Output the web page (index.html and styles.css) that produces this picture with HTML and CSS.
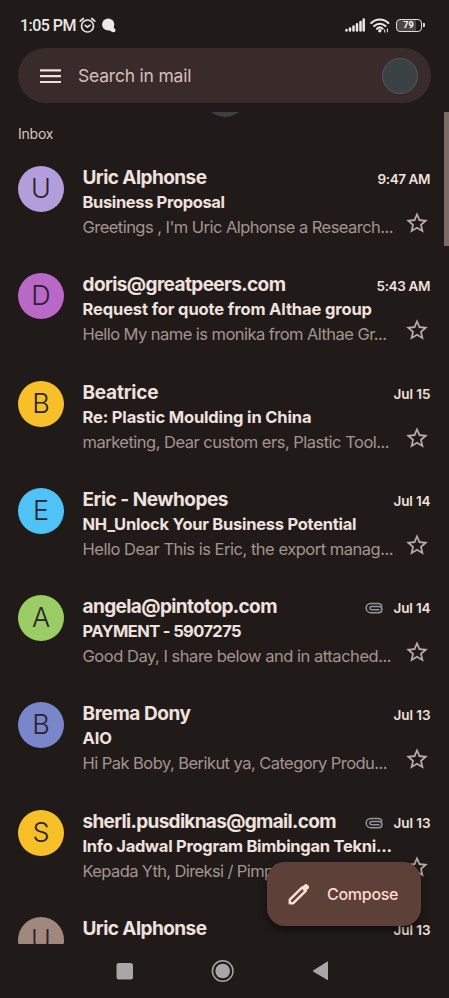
FILE: index.html
```html
<!DOCTYPE html>
<html lang="en">
<head>
<meta charset="utf-8">
<title>Inbox</title>
<link rel="stylesheet" href="styles.css">
</head>
<body>
<svg width="0" height="0" class="defs">
  <symbol id="star" viewBox="0 0 24 24"><path fill="currentColor" d="M22 9.24l-7.19-.62L12 2 9.19 8.63 2 9.24l5.46 4.73L5.82 21 12 17.27 18.18 21l-1.63-7.03L22 9.24zM12 15.4l-3.76 2.27 1-4.28-3.32-2.88 4.38-.38L12 6.1l1.71 4.04 4.38.38-3.32 2.88 1 4.28L12 15.4z"/></symbol>
  <symbol id="clip" viewBox="0 0 18 12"><path fill="none" stroke="currentColor" stroke-width="1.5" stroke-linecap="round" d="M14 7.8H6.6a1.7 1.7 0 0 1 0-3.4h7.2a3 3 0 0 1 0 6.3H5.8a4.6 4.6 0 0 1 0-9.3h7.2q3 0 3.9 2.6"/></symbol>
</svg>
<div class="phone">
  <header class="status">
    <span class="clock" data-w="56.5">1:05 PM</span>
    <svg class="alarm" viewBox="0 0 17 17"><g fill="none" stroke="#e8e4e2" stroke-width="1.7" stroke-linecap="round"><circle cx="8.5" cy="9" r="6"/><path d="M1.2 4.2L4.3 1.5M15.8 4.2L12.7 1.5M6.2 8.4l2.2 1.8 2.6-2"/></g></svg>
    <svg class="bubble" viewBox="0 0 14 15"><g fill="#ece8e6"><circle cx="6.2" cy="6.5" r="6.1"/><path d="M7 12.2l4-4 2.2 4-2.2 2z"/><circle cx="11.5" cy="12.2" r="2"/></g></svg>
    <svg class="signal" viewBox="0 0 20 14"><path stroke="#ece8e6" stroke-width="2.5" stroke-linecap="round" d="M1.5 12v.5M5 10.5v2M8.5 8.5v4M12 6.2v6.3M15.5 4v8.5M18.7 1.5v11"/></svg>
    <svg class="wifi" viewBox="0 0 20 15"><g fill="none" stroke="#ece8e6" stroke-width="2.1" stroke-linecap="round"><path d="M1.3 5a12 12 0 0 1 17 0M4.2 8a8 8 0 0 1 11.2 0M7 10.7a4.2 4.2 0 0 1 5.6 0"/></g><circle cx="9.8" cy="12.8" r="1.7" fill="#ece8e6"/><path stroke="#ece8e6" d="M14.7 11.5v3M17.4 10.5v3.8"/></svg>
    <span class="battery"><b>79</b></span>
  </header>
  <div class="search">
    <svg class="menu" viewBox="0 0 21 14"><path stroke="#efdfdc" stroke-width="2.2" d="M0 1.3h21M0 7.2h21M0 13h21"/></svg>
    <span class="hint" data-w="113.5">Search in mail</span>
    <span class="account"></span>
  </div>
  <main class="list">
    <div class="spinner"></div>
    <div class="scrollbar"></div>
    <h1 class="label"><span data-w="35.5">Inbox</span></h1>

    <article class="mail">
      <div class="avatar lilac">U</div>
      <div class="text">
        <div class="name"><span data-w="124.5">Uric Alphonse</span></div>
        <div class="subject"><span data-w="142.5">Business Proposal</span></div>
        <div class="snippet"><span data-w="311">Greetings , I'm Uric Alphonse a Research...</span></div>
      </div>
      <div class="date"><span data-w="53">9:47 AM</span></div>
      <svg class="star"><use href="#star"/></svg>
    </article>

    <article class="mail">
      <div class="avatar violet">D</div>
      <div class="text">
        <div class="name"><span data-w="203.5">doris@greatpeers.com</span></div>
        <div class="subject"><span data-w="289.5">Request for quote from Althae group</span></div>
        <div class="snippet"><span data-w="304.5">Hello My name is monika from Althae Gr...</span></div>
      </div>
      <div class="date"><span data-w="54">5:43 AM</span></div>
      <svg class="star"><use href="#star"/></svg>
    </article>

    <article class="mail">
      <div class="avatar amber">B</div>
      <div class="text">
        <div class="name"><span data-w="76">Beatrice</span></div>
        <div class="subject"><span data-w="229">Re: Plastic Moulding in China</span></div>
        <div class="snippet"><span data-w="307">marketing, Dear custom ers, Plastic Tool...</span></div>
      </div>
      <div class="date"><span data-w="37">Jul 15</span></div>
      <svg class="star"><use href="#star"/></svg>
    </article>

    <article class="mail">
      <div class="avatar sky">E</div>
      <div class="text">
        <div class="name"><span data-w="146">Eric - Newhopes</span></div>
        <div class="subject"><span data-w="274">NH_Unlock Your Business Potential</span></div>
        <div class="snippet"><span data-w="311">Hello Dear This is Eric, the export manag...</span></div>
      </div>
      <div class="date"><span data-w="37">Jul 14</span></div>
      <svg class="star"><use href="#star"/></svg>
    </article>

    <article class="mail">
      <div class="avatar green">A</div>
      <div class="text">
        <div class="name"><span data-w="195">angela@pintotop.com</span></div>
        <div class="subject"><span data-w="159">PAYMENT - 5907275</span></div>
        <div class="snippet"><span data-w="309">Good Day, I share below and in attached...</span></div>
      </div>
      <div class="date"><svg class="clip"><use href="#clip"/></svg><span data-w="37">Jul 14</span></div>
      <svg class="star"><use href="#star"/></svg>
    </article>

    <article class="mail">
      <div class="avatar indigo">B</div>
      <div class="text">
        <div class="name"><span data-w="108.5">Brema Dony</span></div>
        <div class="subject"><span data-w="29.5">AIO</span></div>
        <div class="snippet"><span data-w="305">Hi Pak Boby, Berikut ya, Category Produ...</span></div>
      </div>
      <div class="date"><span data-w="37">Jul 13</span></div>
      <svg class="star"><use href="#star"/></svg>
    </article>

    <article class="mail">
      <div class="avatar amber">S</div>
      <div class="text">
        <div class="name"><span data-w="254">sherli.pusdiknas@gmail.com</span></div>
        <div class="subject"><span data-w="309.5">Info Jadwal Program Bimbingan Tekni...</span></div>
        <div class="snippet"><span data-w="195">Kepada Yth, Direksi / Pimpi</span></div>
      </div>
      <div class="date"><svg class="clip"><use href="#clip"/></svg><span data-w="37">Jul 13</span></div>
      <svg class="star"><use href="#star"/></svg>
    </article>

    <article class="mail">
      <div class="avatar brown">U</div>
      <div class="text">
        <div class="name"><span data-w="124.5">Uric Alphonse</span></div>
      </div>
      <div class="date"><span data-w="37">Jul 13</span></div>
    </article>
  </main>
  <nav class="nav">
    <svg viewBox="0 0 449 54"><g fill="#a9a6a5"><rect x="116.5" y="19" width="16.5" height="16.5" rx="2.5"/><circle cx="222.7" cy="27" r="7.3"/><path d="M313.5 26.2L327 17.8q1-.6 1 .6v16.8q0 1.200-1 .6L313.500 27.800q-1.200-.8 0-1.600z"/></g><circle cx="222.700" cy="27" r="10.300" fill="none" stroke="#a9a6a5" stroke-width="1.500"/></svg>
  </nav>
  <button class="compose">
    <svg viewBox="0 0 22 22"><path fill="none" stroke="#ffdbd1" stroke-width="2.5" stroke-linejoin="round" d="M1.8 20.200v-3.500L14.200 4.300l3.500 3.500L5.300 20.200z"/><path fill="#ffdbd1" d="M13.300 4.800l3.300-3.300q1.400-1.200 2.800 0l1.200 1.200q1.200 1.400 0 2.800l-3.300 3.300z"/></svg>
    <span data-w="71.5">Compose</span>
  </button>
</div>
<script src="fit.js"></script>
</body>
</html>
```
FILE: styles.css
```css
* { box-sizing: border-box; }
body { margin: 0; background: #201b19; font-family: Inter, Roboto, sans-serif; color: #efe1de; }
.defs { position: absolute; }
.phone { position: relative; width: 449px; height: 998px; overflow: hidden; display: flex; flex-direction: column; }
[data-w] { display: inline-block; white-space: nowrap; }

.status { height: 48px; flex: none; display: flex; align-items: center; padding: 2px 27.5px 0 20px; }
.clock { font-family: Roboto, sans-serif; font-size: 16px; font-weight: 500; line-height: 20px; color: #ebe7e5; padding-top: 2px; }
.alarm { width: 17px; height: 17px; margin-left: 3px; }
.bubble { width: 14px; height: 15px; margin-left: 6px; }
.signal { width: 20px; height: 14px; margin-left: auto; }
.wifi { width: 20px; height: 15px; margin-left: 5px; }
.battery { position: relative; width: 26px; height: 13px; margin-left: 6px; border: 1.5px solid #dedad8; border-radius: 4px; background: linear-gradient(90deg, #4a4644 78%, #201b19 78%); display: flex; align-items: center; justify-content: center; }
.battery b { font: 700 9px/9px Roboto, sans-serif; color: #fff; }
.battery::after { content: ""; position: absolute; right: -4px; top: 3px; width: 2px; height: 4px; background: #dedad8; border-radius: 0 1px 1px 0; }

.search { flex: none; height: 55px; margin: 0 18px; border-radius: 28px; background: #392b29; display: flex; align-items: center; padding: 0 13px 0 22px; }
.menu { width: 21px; height: 14px; }
.hint { margin-left: 17px; font-size: 17.5px; color: #d5c0bc; }
.account { margin-left: auto; width: 36px; height: 36px; border-radius: 50%; background: #3c4144; border: 1px solid #54595b; }

.list { position: relative; flex: none; height: 832px; margin-top: 9px; padding: 0 18.5px 0 18px; overflow: hidden; }
.spinner { position: absolute; left: 202.5px; top: -39px; width: 44px; height: 44px; border-radius: 50%; background: #3a4043; }
.scrollbar { position: absolute; right: 0; top: 0; width: 5px; height: 134px; background: #7b6b68; }
.label { margin: 0; height: 48px; padding-top: 13px; font-size: 14px; line-height: 18px; font-weight: 400; color: #d8c5c1; }

.mail { height: 107.3px; padding-top: 5px; display: grid; grid-template-columns: 64.5px 1fr auto; grid-template-rows: 52px 1fr; }
.avatar { grid-row: 1 / 3; width: 46px; height: 46px; margin-top: 1px; border-radius: 50%; display: flex; align-items: center; justify-content: center; font-size: 27px; font-weight: 300; line-height: 46px; color: #2a2228; }
.lilac { background: #b39ddb; }
.violet { background: #ba68c8; }
.amber { background: #f8c028; }
.sky { background: #4fc3f7; }
.green { background: #9ccc65; }
.indigo { background: #7986cb; }
.brown { background: #a1887f; }
.text { grid-column: 2; grid-row: 1 / 3; width: 0; }
.name { height: 25px; line-height: 25px; font-size: 19px; font-weight: 700; }
.subject { height: 24px; line-height: 25px; font-size: 16.5px; font-weight: 700; }
.snippet { height: 24px; line-height: 26px; font-size: 16.5px; font-weight: 400; color: #a5938e; }
.date { grid-column: 3; grid-row: 1; display: flex; justify-content: flex-end; align-items: center; height: 28px; font-size: 13.5px; font-weight: 600; }
.clip { width: 18px; height: 12px; margin-right: 11px; color: #8f9699; }
.star { grid-column: 3; grid-row: 2; justify-self: end; width: 26px; height: 26px; margin-right: .5px; margin-top: -7px; color: #b9aba7; }

.nav { flex: none; height: 54px; }
.nav svg { display: block; width: 449px; height: 54px; }

.compose { position: absolute; left: 267px; top: 861.5px; width: 154px; height: 64px; border: 0; border-radius: 18px; background: #5d4037; box-shadow: 0 4px 9px rgba(0, 0, 0, .5); display: flex; align-items: center; padding: 1px 0 0 21px; color: #ffdbd1; font: 500 16px/20px Inter, Roboto, sans-serif; }
.compose svg { width: 22px; height: 22px; }
.compose span { margin-left: 17px; }
```
FILE: fit.js
```js
document.querySelectorAll('[data-w]').forEach(function (el) {
  var width = el.getBoundingClientRect().width;
  var gap = (parseFloat(el.dataset.w) - width) / (el.textContent.length - 1);
  el.style.letterSpacing = gap.toFixed(3) + 'px';
  el.style.marginRight = (-gap).toFixed(3) + 'px';
});
```
